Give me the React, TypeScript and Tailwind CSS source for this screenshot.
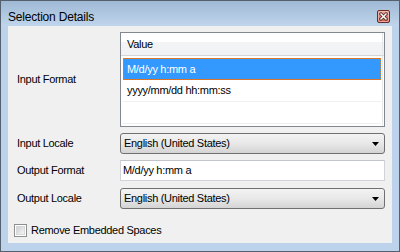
import React from "react";

function CloseButton() {
  return (
    <svg width="13" height="13" viewBox="0 0 13 13">
      <defs>
        <linearGradient id="cb" x1="0" y1="0" x2="0" y2="1">
          <stop offset="0" stopColor="#e9a99f" />
          <stop offset="0.5" stopColor="#d77a6c" />
          <stop offset="1" stopColor="#c75b4c" />
        </linearGradient>
      </defs>
      <rect x="0.5" y="0.5" width="12" height="12" rx="1.5" fill="url(#cb)" stroke="#6b2a24" />
      <rect x="1.5" y="1.5" width="10" height="10" rx="1" fill="none" stroke="#f2c7c0" strokeOpacity="0.7" />
      <path d="M4 4 L9 9 M9 4 L4 9" stroke="#4a1d18" strokeWidth="3" strokeLinecap="square" />
      <path d="M4 4 L9 9 M9 4 L4 9" stroke="#ffffff" strokeWidth="1.5" strokeLinecap="square" />
    </svg>
  );
}

function Dropdown({ value }: { value: string }) {
  return (
    <div className="w-[265px] h-[21px] rounded-[3px] border border-[#707070] bg-gradient-to-b from-[#f3f3f3] via-[#e8e8e8] to-[#d4d4d4] flex items-center justify-between pl-[3px] pr-[5px] text-black">
      <span className="leading-none">{value}</span>
      <svg width="7" height="4" viewBox="0 0 7 4">
        <path d="M0 0 H7 L3.5 4 Z" fill="#000" />
      </svg>
    </div>
  );
}

export default function App() {
  return (
    <div className="w-[400px] h-[252px] border border-[#55606e] bg-[#bcd3eb] flex flex-col font-['Liberation_Sans',Arial,sans-serif] text-[11px] tracking-[-0.3px] text-black">
      <div className="h-[25px] shrink-0 flex items-center justify-between pt-[6px] pl-[7px] pr-[9px] bg-gradient-to-b from-[#9fb9d5] to-[#bfd5ec]">
        <span className="text-[12px] tracking-[-0.2px] leading-none text-black">Selection Details</span>
        <CloseButton />
      </div>
      <div className="mx-[7px] mb-[8px] flex-1 bg-[#f0f0f0] flex flex-col pt-[6px]">
        <div className="flex items-center">
          <div className="w-[112px] pl-[9px]">Input Format</div>
          <div className="relative w-[265px] h-[95px] border border-[#828790] bg-white flex flex-col">
            <div className="h-[23px] shrink-0 flex items-center pl-[6px] border-b border-[#d5d5d5] bg-[linear-gradient(to_bottom,#ffffff_0%,#ffffff_42%,#f3f4f6_43%,#f1f2f4_100%)]">
              <span className="leading-none">Value</span>
            </div>
            <div className="flex flex-col pt-[2px] pl-[2px] w-[260px]">
              <div className="h-[22px] bg-[#3399ff] border border-dotted border-[#e07a2c] flex items-center pl-[3px] text-white">
                M/d/yy h:mm a
              </div>
              <div className="h-[22px] border-b border-[#f0f0f0] flex items-center pl-[4px]">
                yyyy/mm/dd hh:mm:ss
              </div>
              <div className="h-[22px] border-b border-[#f0f0f0]"></div>
            </div>
            <div className="absolute top-0 bottom-0 left-[261px] w-px bg-[#e8e8e8]"></div>
          </div>
        </div>
        <div className="flex items-center mt-[6px]">
          <div className="w-[112px] pl-[9px]">Input Locale</div>
          <Dropdown value="English (United States)" />
        </div>
        <div className="flex items-center mt-[6px]">
          <div className="w-[112px] pl-[9px]">Output Format</div>
          <div className="w-[265px] h-[21px] border border-[#d0d4d9] border-t-[#c2c6cb] bg-white flex items-center pl-[2px]">
            M/d/yy h:mm a
          </div>
        </div>
        <div className="flex items-center mt-[7px]">
          <div className="w-[112px] pl-[9px]">Output Locale</div>
          <Dropdown value="English (United States)" />
        </div>
        <div className="flex items-center mt-[13px] pl-[6px]">
          <div className="w-[13px] h-[13px] border border-[#8e8f8f] bg-white p-[1px]">
            <div className="w-full h-full bg-gradient-to-br from-[#cfd1d4] to-[#f4f4f4] border border-[#d6d8da]"></div>
          </div>
          <span className="ml-[4px]">Remove Embedded Spaces</span>
        </div>
      </div>
    </div>
  );
}
